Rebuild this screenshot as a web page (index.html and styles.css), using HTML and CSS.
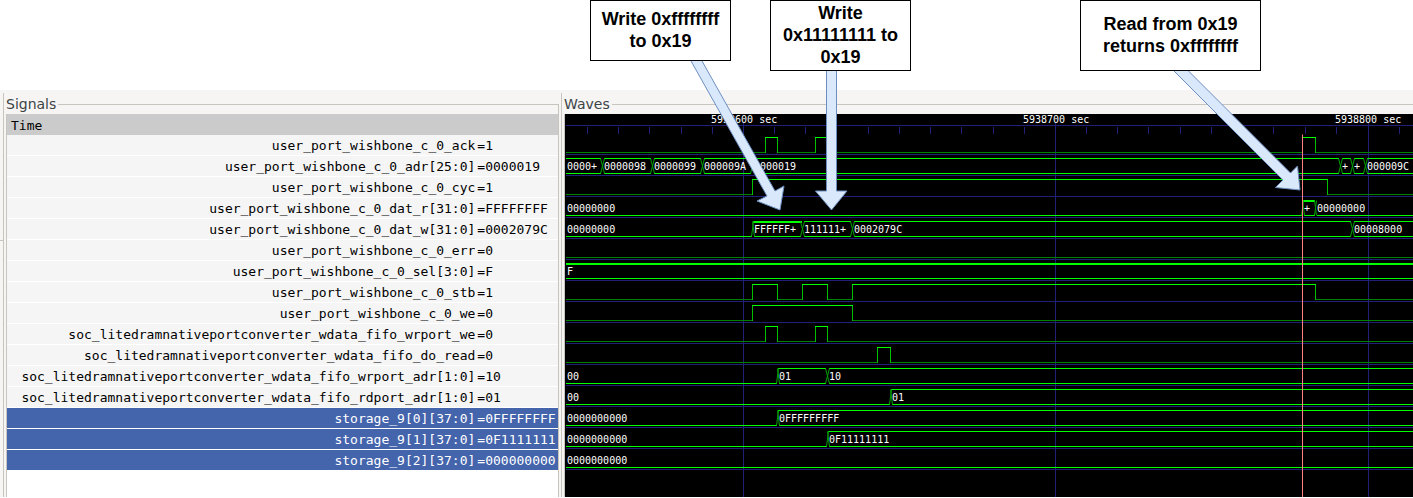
FILE: index.html
```html
<!DOCTYPE html>
<html lang="en">
<head>
<meta charset="utf-8">
<title>Waveform viewer</title>
<link rel="stylesheet" href="styles.css">
</head>
<body>
<main class="page">
  <div class="callouts">
    <p class="callout callout-short">Write 0xffffffff to 0x19</p>
    <p class="callout">Write 0x11111111 to 0x19</p>
    <p class="callout callout-wide">Read from 0x19 returns 0xffffffff</p>
  </div>

  <div class="viewer">
    <div class="gutter"></div>
    <section class="pane signals">
      <h2 class="pane-title">Signals</h2>
      <div class="pane-body">
        <table class="signal-table">
          <colgroup><col class="col-name"><col></colgroup>
          <thead><tr><th colspan="2">Time</th></tr></thead>
          <tbody>
            <tr><td>user_port_wishbone_c_0_ack</td><td>=1</td></tr>
            <tr><td>user_port_wishbone_c_0_adr[25:0]</td><td>=0000019</td></tr>
            <tr><td>user_port_wishbone_c_0_cyc</td><td>=1</td></tr>
            <tr><td>user_port_wishbone_c_0_dat_r[31:0]</td><td>=FFFFFFFF</td></tr>
            <tr><td>user_port_wishbone_c_0_dat_w[31:0]</td><td>=0002079C</td></tr>
            <tr><td>user_port_wishbone_c_0_err</td><td>=0</td></tr>
            <tr><td>user_port_wishbone_c_0_sel[3:0]</td><td>=F</td></tr>
            <tr><td>user_port_wishbone_c_0_stb</td><td>=1</td></tr>
            <tr><td>user_port_wishbone_c_0_we</td><td>=0</td></tr>
            <tr><td>soc_litedramnativeportconverter_wdata_fifo_wrport_we</td><td>=0</td></tr>
            <tr><td>soc_litedramnativeportconverter_wdata_fifo_do_read</td><td>=0</td></tr>
            <tr><td>soc_litedramnativeportconverter_wdata_fifo_wrport_adr[1:0]</td><td>=10</td></tr>
            <tr><td>soc_litedramnativeportconverter_wdata_fifo_rdport_adr[1:0]</td><td>=01</td></tr>
            <tr class="selected"><td>storage_9[0][37:0]</td><td>=0FFFFFFFF</td></tr>
            <tr class="selected"><td>storage_9[1][37:0]</td><td>=0F1111111</td></tr>
            <tr class="selected"><td>storage_9[2][37:0]</td><td>=000000000</td></tr>
          </tbody>
        </table>
      </div>
    </section>
    <section class="pane waves">
      <h2 class="pane-title">Waves</h2>
      <svg class="wave-canvas" role="img" aria-label="Signal waveforms">
        <g transform="translate(-564.5 -113.5)">
          <path class="grid" d="M565 125H4000M587 126v7M618 126v7M649 126v7M681 126v7M712 126v7M774 126v7M805 126v7M836 126v7M868 126v7M899 126v7M930 126v7M961 126v7M993 126v7M1024 126v7M1086 126v7M1117 126v7M1148 126v7M1180 126v7M1211 126v7M1242 126v7M1273 126v7M1305 126v7M1336 126v7M1399 126v7M743 122V600M1055 122V600M1368 122V600"/>
          <path class="grid" d="M565 154H4000M565 175H4000M565 196H4000M565 217H4000M565 238H4000M565 259H4000M565 280H4000M565 301H4000M565 322H4000M565 343H4000M565 364H4000M565 385H4000M565 406H4000M565 427H4000M565 448H4000M565 469H4000"/>

          <path class="low" d="M565 152H765M777 152H815M827 152H1302M1315 152H4000M565 194H752M1327 194H4000M565 257H4000M565 299H752M777 299H802M827 299H852M1315 299H4000M565 320H752M852 320H4000M565 341H765M777 341H815M827 341H4000M565 362H877M890 362H4000"/>
          <path class="edge" d="M765 152V137M777 137V152M815 152V137M827 137V152M1302 152V137M1315 137V152M752 194V179M1327 179V194M752 299V284M777 284V299M802 299V284M827 284V299M852 299V284M1315 284V299M752 320V305M852 305V320M765 341V326M777 326V341M815 341V326M827 326V341M877 362V347M890 347V362"/>
          <path class="high" d="M765 137H777M815 137H827M1302 137H1315M752 179H1327M752 284H777M802 284H827M852 284H1315M752 305H852M765 326H777M815 326H827M877 347H890"/>

          <path class="high" d="M566 158H600M566 173H600M604 158H650M604 173H650M654 158H700M654 173H700M704 158H750M704 173H750M754 158H1338M754 173H1338M1342 158H1350M1342 173H1350M1354 158H1363M1354 173H1363M1367 158H4000M1367 173H4000"/>
          <path class="cross" d="M600 158l4 15M600 173l4-15M650 158l4 15M650 173l4-15M700 158l4 15M700 173l4-15M750 158l4 15M750 173l4-15M1338 158l4 15M1338 173l4-15M1350 158l4 15M1350 173l4-15M1363 158l4 15M1363 173l4-15"/>

          <path class="high" d="M566 215H1301M1304 215H1314M1317 215H4000M1303 200H1314M1303 201H1314"/>
          <path class="cross" d="M1301 215l2-15M1302 200l2 15M1314 200l2 15M1314 215l2-15"/>

          <path class="high" d="M566 236H751M754 236H800M804 236H850M854 236H1350M1354 236H4000M753 221H801M753 222H801M804 221H850M854 221H1350M1354 221H4000"/>
          <path class="cross" d="M751 236l2-15M752 221l2 15M800 236l4-15M800 221l4 15M850 236l4-15M850 221l4 15M1350 236l4-15M1350 221l4 15"/>

          <path class="high" d="M566 263H4000M566 264H4000M566 278H4000"/>

          <path class="high" d="M566 383H776M779 383H825M829 383H4000M778 368H825M829 368H4000M566 404H889M892 404H4000M891 389H4000M566 425H776M779 425H4000M778 410H4000M566 446H826M829 446H4000M828 431H4000M566 467H4000"/>
          <path class="cross" d="M776 383l2-15M777 368l2 15M825 383l4-15M825 368l4 15M889 404l2-15M890 389l2 15M776 425l2-15M777 410l2 15M826 446l2-15M827 431l2 15"/>
        </g>

        <g class="labels" transform="translate(-565 -114)">
          <text x="711" y="123">5938600 sec</text><text x="1023" y="123">5938700 sec</text><text x="1335" y="123">5938800 sec</text>
          <text x="567" y="170">0000+</text><text x="604" y="170">0000098</text><text x="654" y="170">0000099</text><text x="704" y="170">000009A</text><text x="754" y="170">0000019</text><text x="1342" y="170">+</text><text x="1354" y="170">+</text><text x="1367" y="170">000009C</text>
          <text x="567" y="212">00000000</text><text x="1304" y="212">+</text><text x="1317" y="212">00000000</text>
          <text x="567" y="233">00000000</text><text x="754" y="233">FFFFFF+</text><text x="804" y="233">111111+</text><text x="854" y="233">0002079C</text><text x="1354" y="233">00008000</text>
          <text x="567" y="275">F</text>
          <text x="567" y="380">00</text><text x="779" y="380">01</text><text x="829" y="380">10</text>
          <text x="567" y="401">00</text><text x="892" y="401">01</text>
          <text x="567" y="422">0000000000</text><text x="779" y="422">0FFFFFFFFF</text>
          <text x="567" y="443">0000000000</text><text x="829" y="443">0F11111111</text>
          <text x="567" y="464">0000000000</text>
        </g>
        <path class="marker" transform="translate(-564.5 -113.5)" d="M1302 134V600"/>
      </svg>
    </section>
  </div>

  <svg class="arrows" aria-hidden="true">
    <path d="M691 61L767 196L757 201L780 210L784 186L775 191L702 61"/>
    <path d="M826.5 71V191H815.5L831.5 210L847 191H836.5V71"/>
    <path d="M1174 71L1283 180L1275.5 187.5L1300 190L1297.5 166L1290.500 173L1188.500 71"/>
  </svg>
</main>
</body>
</html>
```
FILE: styles.css
```css
body {
  margin: 0;
  background: #fff;
}

.page {
  position: relative;
  overflow: hidden;
}

/* Annotations above the viewer */
.callouts {
  display: flex;
  align-items: flex-start;
  min-height: 90px;
  padding-left: 590px;
}

.callout {
  display: flex;
  align-items: center;
  justify-content: center;
  box-sizing: border-box;
  flex: none;
  width: 141px;
  height: 71px;
  margin: 0 0 0 39px;
  padding: 0 8px 2px;
  border: 1px solid #000;
  background: #fff;
  color: #000;
  font: bold 18px/22px "Liberation Sans", Arial, sans-serif;
  text-align: center;
}

.callout-short {
  height: 61px;
  margin-left: 0;
}

.callout-wide {
  width: 181px;
  margin-left: 169px;
  padding: 0 16px 2px;
}

.arrows {
  position: absolute;
  inset: 0;
  width: 100%;
  height: 100%;
  pointer-events: none;
}

.arrows path {
  fill: #dae8fc;
  stroke: #6c8ebf;
}

/* Viewer panes */
.viewer {
  display: flex;
  background: #f6f5f3;
}

.gutter {
  flex: none;
  box-sizing: border-box;
  width: 3px;
  height: 151px;
  border-bottom: 1px solid #c8c4be;
}

.pane {
  display: flex;
  flex-direction: column;
  box-sizing: border-box;
  margin-top: 3px;
  padding-left: 2px;
  border-left: 1px solid #c8c4be;
}

.signals {
  flex: 0 1 558px;
  padding-right: 2px;
}

.waves {
  flex: 1;
  min-width: 0;
}

.pane-title {
  display: flex;
  height: 21px;
  margin: 0;
  color: #3c4446;
  font: 14px/22px "DejaVu Sans", sans-serif;
}

.pane-title::after {
  content: "";
  flex: 1;
  margin: 11px 0 0 2px;
  border-top: 1px solid #c8c4be;
}

.signals .pane-title::after {
  border-right: 1px solid #c8c4be;
}

.pane-body {
  flex: 1;
  border: solid #c8c4be;
  border-width: 0 1px;
  background: #fff;
}

.signal-table {
  width: 100%;
  table-layout: fixed;
  border-spacing: 0;
  color: #000;
  font: 13px/18px "DejaVu Sans Mono", monospace;
}

.col-name {
  width: 85%;
}

.signal-table th {
  padding: 3px 4px 0;
  background: #cbcbcb;
  font-weight: normal;
  text-align: left;
}

.signal-table td {
  padding: 2px 0 0 2px;
  overflow: hidden;
  border-bottom: 1px solid #fff;
  background: #f5f5f5;
  white-space: nowrap;
}

.signal-table td:first-child {
  padding-left: 0;
  text-align: right;
}

.signal-table .selected td {
  background: #4464ac;
  color: #fff;
}

/* Waveform drawing */
.wave-canvas {
  display: block;
  box-sizing: border-box;
  width: 100%;
  height: 383px;
  border-left: 1px solid #c8c4be;
  background: #000;
}

.wave-canvas path {
  fill: none;
  stroke-width: 1;
}

.wave-canvas .grid,
.wave-canvas .low,
.wave-canvas .edge,
.wave-canvas .high {
  shape-rendering: crispEdges;
}

.wave-canvas .grid { stroke: #202078; }
.wave-canvas .low { stroke: #008000; }
.wave-canvas .edge { stroke: #00c000; stroke-linecap: square; }
.wave-canvas .high { stroke: #00ff00; stroke-linecap: square; }
.wave-canvas .cross { stroke: #00a000; }
.wave-canvas .marker { stroke: #ff8080; }

.labels {
  fill: #fff;
  font: 10px "DejaVu Sans Mono", monospace;
}
```
